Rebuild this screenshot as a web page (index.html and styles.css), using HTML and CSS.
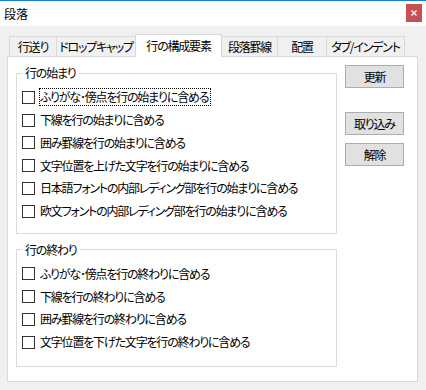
FILE: index.html
```html
<!DOCTYPE html>
<html lang="ja">
<head>
<meta charset="utf-8">
<title>段落</title>
<link rel="stylesheet" href="styles.css">
</head>
<body>
<div class="window">
  <div class="titlebar">
    <span class="title">段落</span>
    <button class="close" aria-label="閉じる">
      <svg width="6" height="6" viewBox="0 0 6 6"><path d="M0.5 0.5L5.5 5.5M5.5 0.5L0.5 5.5" stroke="#fff" stroke-width="1.3" fill="none"/></svg>
    </button>
  </div>
  <div class="body">
    <div class="tabs">
      <div class="tab tab-1">行送り</div>
      <div class="tab tab-2">ドロップキャップ</div>
      <div class="tab tab-3 active">行の構成要素</div>
      <div class="tab tab-4">段落罫線</div>
      <div class="tab tab-5">配置</div>
      <div class="tab tab-6">タブ/インデント</div>
    </div>
    <div class="panel">
      <div class="groups">
        <fieldset class="group group-start">
          <legend>行の始まり</legend>
          <div class="rows">
            <label class="row"><span class="cb"></span><span class="label focus">ふりがな･傍点を行の始まりに含める</span></label>
            <label class="row"><span class="cb"></span><span class="label">下線を行の始まりに含める</span></label>
            <label class="row"><span class="cb"></span><span class="label">囲み罫線を行の始まりに含める</span></label>
            <label class="row"><span class="cb"></span><span class="label">文字位置を上げた文字を行の始まりに含める</span></label>
            <label class="row"><span class="cb"></span><span class="label">日本語フォントの内部レディング部を行の始まりに含める</span></label>
            <label class="row"><span class="cb"></span><span class="label">欧文フォントの内部レディング部を行の始まりに含める</span></label>
          </div>
        </fieldset>
        <fieldset class="group group-end">
          <legend>行の終わり</legend>
          <div class="rows">
            <label class="row"><span class="cb"></span><span class="label">ふりがな･傍点を行の終わりに含める</span></label>
            <label class="row"><span class="cb"></span><span class="label">下線を行の終わりに含める</span></label>
            <label class="row"><span class="cb"></span><span class="label">囲み罫線を行の終わりに含める</span></label>
            <label class="row"><span class="cb"></span><span class="label">文字位置を下げた文字を行の終わりに含める</span></label>
          </div>
        </fieldset>
      </div>
      <div class="actions">
        <button class="btn">更新</button>
        <button class="btn btn-far">取り込み</button>
        <button class="btn btn-near">解除</button>
      </div>
    </div>
  </div>
</div>
</body>
</html>
```

FILE: styles.css
```css
* { box-sizing: border-box; }

body {
  margin: 0;
  background: #f0f0f0;
  font-family: "Noto Sans CJK JP", "Noto Sans", sans-serif;
  font-size: 12px;
  letter-spacing: -1.2px;
  color: #000;
  font-feature-settings: "palt";
}

.window {
  width: 426px;
  height: 390px;
  overflow: hidden;
  background: #f0f0f0;
}

.titlebar {
  height: 26px;
  background: #fff;
  border-top: 1px solid #1883d7;
  display: flex;
  justify-content: space-between;
  align-items: flex-start;
  padding: 0 4px 0 4px;
}

.title {
  line-height: 25px;
  letter-spacing: 0;
}

.close {
  margin-top: 3px;
  width: 16px;
  height: 18px;
  background: #c75050;
  border: 0;
  padding: 0;
  display: flex;
  align-items: center;
  justify-content: center;
}

.body {
  padding: 8px 8px 0 7px;
}

.tabs {
  display: flex;
  align-items: flex-end;
  margin-left: 2px;
}

.tab {
  height: 20px;
  border: 1px solid #d9d9d9;
  border-bottom: 0;
  background: #f0f0f0;
  display: flex;
  align-items: center;
  justify-content: center;
  line-height: 16px;
  white-space: nowrap;
  margin-left: -1px;
}

.tab-1 { width: 48px; margin-left: 0; }
.tab-2 { width: 80px; }
.tab-3 { width: 87px; }
.tab-4 { width: 57px; }
.tab-5 { width: 50px; }
.tab-6 { width: 79px; }

.tab.active {
  height: 23px;
  margin-bottom: -1px;
  background: #fff;
  position: relative;
  z-index: 1;
  padding-bottom: 1px;
}

.panel {
  height: 326px;
  background: #fff;
  border: 1px solid #d9d9d9;
  display: flex;
  align-items: flex-start;
  gap: 8px;
  padding: 8px 0 0 8px;
}

.groups {
  display: flex;
  flex-direction: column;
}

.group {
  width: 321px;
  margin: 0;
  border: 1px solid #dcdcdc;
  padding: 0 0 10px 5px;
  min-width: 0;
}

.group + .group {
  margin-top: 8px;
}

.group-end {
  padding-bottom: 12px;
}

.group legend {
  padding: 0 3px;
  line-height: 16px;
}

.rows {
  padding-top: 5px;
  display: flex;
  flex-direction: column;
}

.row {
  height: 22.75px;
  display: flex;
  align-items: center;
  white-space: nowrap;
}

.cb {
  flex: none;
  width: 13px;
  height: 13px;
  border: 1px solid #333;
  background: #fff;
  margin-right: 4px;
}

.label {
  border: 1px dotted transparent;
  padding: 0 2px 0 0;
  line-height: 16px;
}

.label.focus {
  border-color: #000;
}

.actions {
  display: flex;
  flex-direction: column;
  width: 59px;
}

.btn {
  height: 23px;
  background: #e1e1e1;
  border: 1px solid #adadad;
  padding: 0;
  font: inherit;
  letter-spacing: inherit;
  color: #000;
}

.btn-far { margin-top: 24px; }
.btn-near { margin-top: 8px; }
```
